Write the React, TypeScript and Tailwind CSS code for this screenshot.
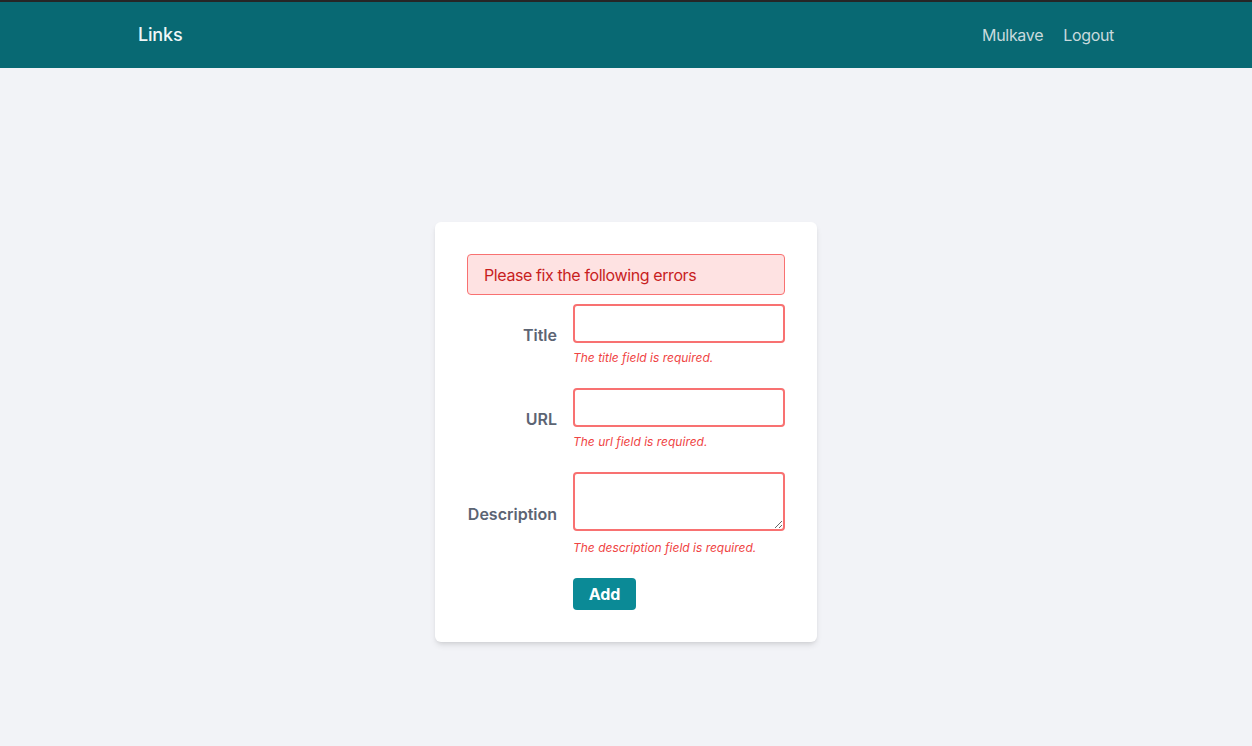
import React from 'react';

function Field({
  label,
  error,
  textarea,
}: {
  label: string;
  error: string;
  textarea?: boolean;
}) {
  return (
    <div className="flex items-center gap-4">
      <label className="w-[90px] shrink-0 text-right font-semibold text-[#5c6473]">{label}</label>
      <div className="flex w-[212px] flex-col">
        {textarea ? (
          <textarea className="block h-[59px] w-full rounded border-2 border-[#f87171] bg-white px-2 outline-none" />
        ) : (
          <input
            type="text"
            className="block h-[39px] w-full rounded border-2 border-[#f87171] bg-white px-2 outline-none"
          />
        )}
        <p className={`text-xs italic leading-4 text-[#ef4444] ${textarea ? 'mt-[9px]' : 'mt-[7px]'}`}>{error}</p>
      </div>
    </div>
  );
}

export default function App() {
  return (
    <div className="min-h-screen bg-[#f2f3f7] font-['Inter',sans-serif] text-base">
      <header className="h-[68px] border-t-2 border-[#262626] bg-[#086973]">
        <div className="mx-auto flex h-full max-w-5xl items-center justify-between px-6">
          <a href="#" className="text-lg font-medium tracking-[-0.01em] text-[#eef7f8]">
            Links
          </a>
          <nav className="flex items-center gap-5 tracking-[-0.02em] text-[#c9dadd]">
            <a href="#">Mulkave</a>
            <a href="#">Logout</a>
          </nav>
        </div>
      </header>

      <main className="flex justify-center pt-[154px]">
        <div className="w-[382px] rounded-md bg-white p-8 shadow-md">
          <div className="flex h-[41px] items-center rounded border border-[#f87171] bg-[#fee2e2] px-4 tracking-[-0.025em] text-[#c81e1e]">
            Please fix the following errors
          </div>
          <form className="mt-[9px] flex flex-col gap-[22px]">
            <Field label="Title" error="The title field is required." />
            <Field label="URL" error="The url field is required." />
            <Field label="Description" error="The description field is required." textarea />
            <div className="pl-[106px]">
              <button
                type="button"
                className="h-8 w-[63px] rounded bg-[#0b8a96] font-bold text-white"
              >
                Add
              </button>
            </div>
          </form>
        </div>
      </main>
    </div>
  );
}
